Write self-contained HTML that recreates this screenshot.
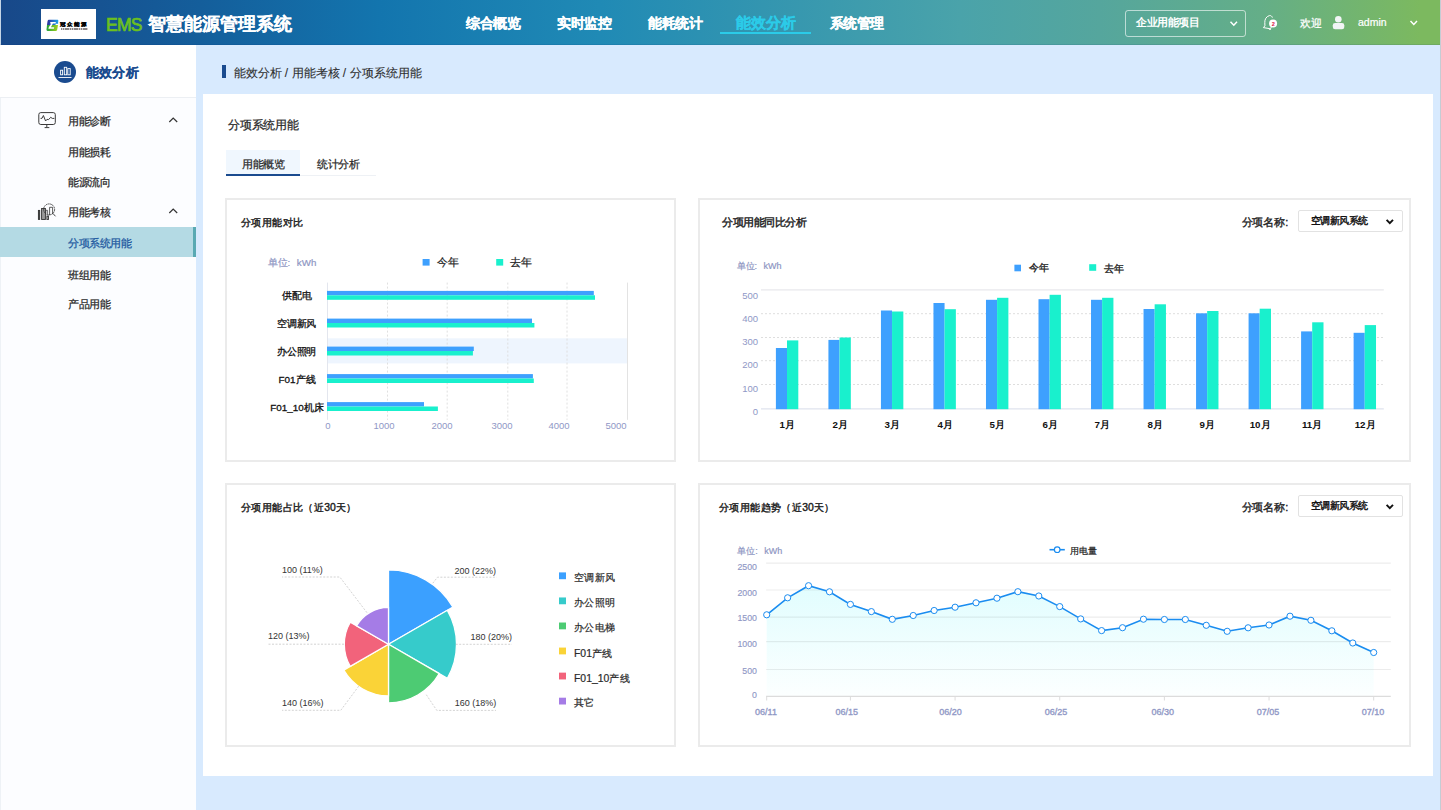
<!DOCTYPE html><html><head><meta charset="utf-8"><title>EMS 智慧能源管理系统</title><style>
*{margin:0;padding:0;box-sizing:border-box}
html,body{width:1441px;height:810px;overflow:hidden;background:#d8eafe;font-family:"Liberation Sans",sans-serif;color:#333}
.a{position:absolute}
.t{position:absolute;white-space:nowrap;line-height:1}
.card{position:absolute;border:2px solid #ebebeb;background:#fff}
svg{position:absolute;left:0;top:0;overflow:visible}
</style></head><body>
<div class="a" style="left:0;top:0;width:1441px;height:45px;background:linear-gradient(90deg,#184889 0px,#145e9b 200px,#1375ae 380px,#208ab5 600px,#4aa3aa 960px,#55a69d 1100px,#64ae88 1260px,#7cb95f 1420px,#7cb95f 1441px)"></div>
<div class="a" style="left:0;top:0;width:1px;height:45px;background:#c5d5e6"></div>
<div class="a" style="left:0;top:44px;width:1441px;height:1px;background:rgba(0,40,120,0.1)"></div>
<div class="a" style="left:41px;top:9px;width:55px;height:30px;background:#fff"></div>
<div class="a" style="left:60.5px;top:28.2px;width:27.8px;height:1.5px;background:repeating-linear-gradient(90deg,#8a8585 0 1.2px,#d0cccc 1.2px 1.8px)"></div>
<div class="a" style="left:720px;top:32px;width:90.5px;height:2px;background:#2bcbe8"></div>
<div class="a" style="left:1125px;top:10px;width:121px;height:27px;border:1px solid rgba(255,255,255,0.6);border-radius:3px"></div>
<div class="a" style="left:1440px;top:0;width:1px;height:810px;background:#c5ccd4;z-index:5"></div>
<div class="a" style="left:0;top:45px;width:196px;height:765px;background:#fcfdff"></div>
<div class="a" style="left:0;top:45px;width:1px;height:765px;background:#eef2f6"></div>
<div class="a" style="left:0;top:45px;width:196px;height:52.5px;background:#fff;border-bottom:1px solid #eceff3"></div>
<div class="a" style="left:54.2px;top:61px;width:22px;height:22px;border-radius:50%;background:#1a4b8f"></div>
<div class="a" style="left:0;top:227px;width:196px;height:30px;background:#b4dae4;border-right:3px solid #59a9b3"></div>
<div class="a" style="left:203px;top:94px;width:1230px;height:682px;background:#fff"></div>
<div class="a" style="left:222px;top:64.5px;width:4.2px;height:13.4px;background:#1a4b8f"></div>
<div class="a" style="left:226px;top:150px;width:74px;height:26px;background:#f0f7fe;border-bottom:2px solid #1a4b8f"></div>
<div class="a" style="left:300px;top:174.5px;width:75.5px;height:1.5px;background:#eef1f5"></div>
<div class="card" style="left:225.2px;top:198.1px;width:450.5px;height:263.8px"></div>
<div class="card" style="left:697.9px;top:198.1px;width:712.9px;height:263.8px"></div>
<div class="card" style="left:225.2px;top:483.2px;width:450.5px;height:263.6px"></div>
<div class="card" style="left:697.9px;top:483.2px;width:712.9px;height:263.6px"></div>
<div class="a" style="left:1298.3px;top:210.2px;width:104.5px;height:22px;border:1px solid #e2e2e2;border-radius:2px"></div>
<div class="a" style="left:1298.3px;top:495.2px;width:104.5px;height:22px;border:1px solid #e2e2e2;border-radius:2px"></div>
<svg width="1441" height="810" style="left:0;top:0"><defs>
<linearGradient id="lgb" x1="0" y1="0" x2="1" y2="0"><stop offset="0" stop-color="#2b2a9a"/><stop offset="1" stop-color="#1ba3ea"/></linearGradient>
<linearGradient id="lgg" x1="0" y1="0" x2="1" y2="0"><stop offset="0" stop-color="#1e9e3a"/><stop offset="1" stop-color="#a6d21e"/></linearGradient>
<linearGradient id="ag" x1="0" y1="0" x2="0" y2="1"><stop offset="0" stop-color="#e1fdfe"/><stop offset="1" stop-color="#fcffff"/></linearGradient>
</defs>
<path d="M48.8 19.7 L57.6 19.7 Q58.4 19.7 58.3 20.6 L58 25 L47 25 L47.6 21 Q47.9 19.7 48.8 19.7 Z" fill="url(#lgb)"/>
<path d="M47 25 L58 25 L57.2 29.8 Q57 30.9 56 30.9 L47.6 30.9 Q46.4 30.9 46.5 29.8 Z" fill="url(#lgg)"/>
<path d="M50.4 21.9 L55.9 21.9 L55.5 23.5 L52.9 23.5 L50.9 27.3 L54.2 27.3 L53.9 28.8 L48.4 28.8 L48.8 27.3 L51.2 23.5 L50 23.5 Z" fill="#fff"/>
<rect x="55.6" y="23.8" width="3" height="1.2" fill="#fff"/><path d="M1230.5 21.8 L1233.8 25.2 L1237 21.8" fill="none" stroke="#fff" stroke-width="1.5"/><path d="M1410.5 21 L1413.8 24.4 L1417 21" fill="none" stroke="#fff" stroke-width="1.5"/><path d="M1269.4 15.6 C1266.2 16.5 1264.6 19.5 1264.8 22.5 L1264.9 25.8 L1263.4 27.6 L1270.5 28.8 L1271.5 26.5" fill="none" stroke="#fff" stroke-width="1" stroke-linejoin="round"/><path d="M1269.4 15.6 C1270.8 15.3 1272 16.2 1272.4 17.6" fill="none" stroke="#fff" stroke-width="1"/><path d="M1268.5 28.6 Q1269.3 30 1270.8 29.4" fill="none" stroke="#fff" stroke-width="1"/><circle cx="1273.1" cy="23.5" r="4" fill="#fff"/><text x="1273.2" y="25.6" font-size="5.6" font-weight="bold" fill="#d80f45" text-anchor="middle" font-family="Liberation Sans">2</text><circle cx="1338.3" cy="19.3" r="3.3" fill="#f2f5f6"/><rect x="1332.8" y="22.9" width="11.5" height="6.3" rx="2.3" fill="#f2f5f6"/><g fill="none" stroke="#fff" stroke-width="0.9"><rect x="60.6" y="70.2" width="2" height="4.6"/><rect x="64.3" y="67.3" width="2.4" height="7.5"/><rect x="67.8" y="68.6" width="2.4" height="6.2"/><path d="M58.5 77.5 L71.5 77.5"/></g><g fill="none" stroke="#333" stroke-width="1.2"><path d="M169.3 122 L173.2 118 L177.2 122"/><path d="M169.3 213 L173.2 209 L177.2 213"/></g><g fill="none" stroke="#3a3a3a" stroke-width="1"><rect x="38.8" y="112.6" width="16.5" height="11.9" rx="2"/><path d="M40.6 118.4 L42 118.3 L43.4 115.5 L45.6 121 L47 119.3 L48.5 119.7 L50.7 117.3 L52.3 118.4 L54.3 118.4"/><path d="M46.8 124.5 L46.8 127 M44.6 127.6 L49.3 127.6"/></g><g stroke="#333" stroke-width="0.9"><rect x="38.4" y="210.4" width="1.3" height="9" fill="#333"/><rect x="41.6" y="208.5" width="3.8" height="11" fill="#999"/><rect x="46.9" y="216" width="1.6" height="3.5" fill="#bbb"/><circle cx="49.1" cy="209.4" r="5.5" fill="none" stroke-dasharray="1.6,0.6"/><path d="M52.8 213.3 L55.5 216.3" fill="none"/><path d="M49.6 215 L49.6 207.3 L52.6 207.3 L52.6 214" fill="none" stroke-width="0.8"/><path d="M45.9 213.5 L45.9 210.3 L47.6 210.3 L47.6 214.5" fill="none" stroke-width="0.7"/></g><rect x="422.6" y="259" width="7" height="6.6" fill="#3ea0fe"/><rect x="496.2" y="259" width="7" height="6.6" fill="#19f0cd"/><rect x="327" y="338.3" width="300.5" height="25.1" fill="#eef5fe"/><line x1="387.5" y1="282.6" x2="387.5" y2="419.8" stroke="#dcdcdc" stroke-width="0.9" stroke-dasharray="2,2"/><line x1="447.2" y1="282.6" x2="447.2" y2="419.8" stroke="#dcdcdc" stroke-width="0.9" stroke-dasharray="2,2"/><line x1="507.8" y1="282.6" x2="507.8" y2="419.8" stroke="#dcdcdc" stroke-width="0.9" stroke-dasharray="2,2"/><line x1="567" y1="282.6" x2="567" y2="419.8" stroke="#dcdcdc" stroke-width="0.9" stroke-dasharray="2,2"/><line x1="627.5" y1="282.6" x2="627.5" y2="419.8" stroke="#e3e3e3" stroke-width="1"/><line x1="327.5" y1="282.6" x2="327.5" y2="419.8" stroke="#e3e6ee" stroke-width="1"/><rect x="327" y="290.90000000000003" width="266.79999999999995" height="4.4" fill="#3ea0fe"/><rect x="327" y="295.3" width="268" height="4.5" fill="#19f0cd"/><rect x="327" y="318.6" width="205" height="4.4" fill="#3ea0fe"/><rect x="327" y="323" width="207.39999999999998" height="4.5" fill="#19f0cd"/><rect x="327" y="346.6" width="146.8" height="4.4" fill="#3ea0fe"/><rect x="327" y="351" width="145.89999999999998" height="4.5" fill="#19f0cd"/><rect x="327" y="374.1" width="205.89999999999998" height="4.4" fill="#3ea0fe"/><rect x="327" y="378.5" width="206.79999999999995" height="4.5" fill="#19f0cd"/><rect x="327" y="402.1" width="97" height="4.4" fill="#3ea0fe"/><rect x="327" y="406.5" width="110.89999999999998" height="4.5" fill="#19f0cd"/><path d="M1386.6 219.8 L1389.8 223.2 L1393 219.8" fill="none" stroke="#111" stroke-width="1.9"/><rect x="1014.4" y="264.7" width="6.6" height="6.6" fill="#3ea0fe"/><rect x="1089.2" y="264.2" width="7" height="6.6" fill="#19f0cd"/><line x1="761" y1="313.7" x2="1383.8" y2="313.7" stroke="#dedede" stroke-width="1" stroke-dasharray="2,2"/><line x1="761" y1="337.5" x2="1383.8" y2="337.5" stroke="#dedede" stroke-width="1" stroke-dasharray="2,2"/><line x1="761" y1="360.7" x2="1383.8" y2="360.7" stroke="#dedede" stroke-width="1" stroke-dasharray="2,2"/><line x1="761" y1="384.5" x2="1383.8" y2="384.5" stroke="#dedede" stroke-width="1" stroke-dasharray="2,2"/><line x1="761" y1="289.9" x2="1383.8" y2="289.9" stroke="#e8e8ec" stroke-width="1.2"/><line x1="761" y1="408.9" x2="1383.8" y2="408.9" stroke="#dfe3ee" stroke-width="1.2"/><rect x="775.90" y="348" width="11.1" height="61.20" fill="#3ea0fe"/><rect x="787.00" y="340.4" width="11.3" height="68.80" fill="#19f0cd"/><rect x="828.42" y="339.9" width="11.1" height="69.30" fill="#3ea0fe"/><rect x="839.52" y="337.5" width="11.3" height="71.70" fill="#19f0cd"/><rect x="880.94" y="310.5" width="11.1" height="98.70" fill="#3ea0fe"/><rect x="892.04" y="311.5" width="11.3" height="97.70" fill="#19f0cd"/><rect x="933.46" y="303" width="11.1" height="106.20" fill="#3ea0fe"/><rect x="944.56" y="309.2" width="11.3" height="100.00" fill="#19f0cd"/><rect x="985.98" y="299.8" width="11.1" height="109.40" fill="#3ea0fe"/><rect x="997.08" y="297.8" width="11.3" height="111.40" fill="#19f0cd"/><rect x="1038.50" y="299.2" width="11.1" height="110.00" fill="#3ea0fe"/><rect x="1049.60" y="294.8" width="11.3" height="114.40" fill="#19f0cd"/><rect x="1091.02" y="299.8" width="11.1" height="109.40" fill="#3ea0fe"/><rect x="1102.12" y="297.8" width="11.3" height="111.40" fill="#19f0cd"/><rect x="1143.54" y="309" width="11.1" height="100.20" fill="#3ea0fe"/><rect x="1154.64" y="304.3" width="11.3" height="104.90" fill="#19f0cd"/><rect x="1196.06" y="313.3" width="11.1" height="95.90" fill="#3ea0fe"/><rect x="1207.16" y="311" width="11.3" height="98.20" fill="#19f0cd"/><rect x="1248.58" y="313.3" width="11.1" height="95.90" fill="#3ea0fe"/><rect x="1259.68" y="308.7" width="11.3" height="100.50" fill="#19f0cd"/><rect x="1301.10" y="331.4" width="11.1" height="77.80" fill="#3ea0fe"/><rect x="1312.20" y="322.3" width="11.3" height="86.90" fill="#19f0cd"/><rect x="1353.62" y="332.8" width="11.1" height="76.40" fill="#3ea0fe"/><rect x="1364.72" y="325.1" width="11.3" height="84.10" fill="#19f0cd"/><path d="M388.5 644.3 L388.50 569.90 A74.40 74.40 0 0 1 452.93 607.10 Z" fill="#3ba0ff" stroke="#fff" stroke-width="1.3"/><path d="M388.5 644.3 L447.39 610.30 A68.00 68.00 0 0 1 447.39 678.30 Z" fill="#36cbcb" stroke="#fff" stroke-width="1.3"/><path d="M388.5 644.3 L439.25 673.60 A58.60 58.60 0 0 1 388.50 702.90 Z" fill="#4dcb73" stroke="#fff" stroke-width="1.3"/><path d="M388.5 644.3 L388.50 695.90 A51.60 51.60 0 0 1 343.81 670.10 Z" fill="#fad337" stroke="#fff" stroke-width="1.3"/><path d="M388.5 644.3 L350.22 666.40 A44.20 44.20 0 0 1 350.22 622.20 Z" fill="#f2637b" stroke="#fff" stroke-width="1.3"/><path d="M388.5 644.3 L356.54 625.85 A36.90 36.90 0 0 1 388.50 607.40 Z" fill="#a57ce6" stroke="#fff" stroke-width="1.3"/><polyline points="432.8,583.2 437.5,577.2 496.6,577.2" fill="none" stroke="#c8c8c8" stroke-width="0.8" stroke-dasharray="2,1.5"/><polyline points="455.7,644.3 512,644.3" fill="none" stroke="#c8c8c8" stroke-width="0.8" stroke-dasharray="2,1.5"/><polyline points="426.3,694.7 436.8,710.4 496,710.4" fill="none" stroke="#c8c8c8" stroke-width="0.8" stroke-dasharray="2,1.5"/><polyline points="367,612.7 339.8,577 282,577" fill="none" stroke="#c8c8c8" stroke-width="0.8" stroke-dasharray="2,1.5"/><polyline points="344,644.2 268,644.2" fill="none" stroke="#c8c8c8" stroke-width="0.8" stroke-dasharray="2,1.5"/><polyline points="358.7,686.2 340.8,710.3 282,710.3" fill="none" stroke="#c8c8c8" stroke-width="0.8" stroke-dasharray="2,1.5"/><rect x="559" y="572.40" width="7" height="6.8" fill="#3ba0ff"/><rect x="559" y="597.46" width="7" height="6.8" fill="#36cbcb"/><rect x="559" y="622.52" width="7" height="6.8" fill="#4dcb73"/><rect x="559" y="647.58" width="7" height="6.8" fill="#fad337"/><rect x="559" y="672.64" width="7" height="6.8" fill="#f2637b"/><rect x="559" y="697.70" width="7" height="6.8" fill="#a57ce6"/><path d="M1386.6 504.8 L1389.8 508.2 L1393 504.8" fill="none" stroke="#111" stroke-width="1.9"/><line x1="1049.5" y1="549.7" x2="1064.8" y2="549.7" stroke="#1a8cf0" stroke-width="1.6"/><circle cx="1057.2" cy="549.7" r="2.8" fill="#fff" stroke="#1a8cf0" stroke-width="1.2"/><polygon points="766.70,696.1 766.70,614.8 787.63,597.8 808.56,585.7 829.49,591.8 850.42,604.4 871.36,611.6 892.29,619.3 913.22,615.5 934.15,610.5 955.08,607.2 976.01,602.8 996.94,598.2 1017.87,591.7 1038.80,596 1059.73,606.6 1080.67,618.9 1101.60,630.6 1122.53,627.7 1143.46,619.2 1164.39,619.5 1185.32,619.5 1206.25,625.3 1227.18,631.3 1248.11,627.8 1269.04,625 1289.98,616.2 1310.91,620.3 1331.84,630.8 1352.77,643 1373.70,652.5 1373.70,696.1" fill="url(#ag)"/><line x1="766.1" y1="563.1" x2="1390.8" y2="563.1" stroke="rgba(0,0,0,0.075)" stroke-width="1.2"/><line x1="766.1" y1="590" x2="1390.8" y2="590" stroke="rgba(0,0,0,0.075)" stroke-width="1.2"/><line x1="766.1" y1="617.1" x2="1390.8" y2="617.1" stroke="rgba(0,0,0,0.075)" stroke-width="1.2"/><line x1="766.1" y1="641.6" x2="1390.8" y2="641.6" stroke="rgba(0,0,0,0.075)" stroke-width="1.2"/><line x1="766.1" y1="669.5" x2="1390.8" y2="669.5" stroke="rgba(0,0,0,0.075)" stroke-width="1.2"/><line x1="766.1" y1="696.3" x2="1390.8" y2="696.3" stroke="#dcdcdc" stroke-width="1.2"/><line x1="766.70" y1="696.3" x2="766.70" y2="700.5" stroke="#dcdcdc" stroke-width="1"/><line x1="850.42" y1="696.3" x2="850.42" y2="700.5" stroke="#dcdcdc" stroke-width="1"/><line x1="955.08" y1="696.3" x2="955.08" y2="700.5" stroke="#dcdcdc" stroke-width="1"/><line x1="1059.73" y1="696.3" x2="1059.73" y2="700.5" stroke="#dcdcdc" stroke-width="1"/><line x1="1164.39" y1="696.3" x2="1164.39" y2="700.5" stroke="#dcdcdc" stroke-width="1"/><line x1="1269.04" y1="696.3" x2="1269.04" y2="700.5" stroke="#dcdcdc" stroke-width="1"/><line x1="1373.70" y1="696.3" x2="1373.70" y2="700.5" stroke="#dcdcdc" stroke-width="1"/><polyline points="766.70,614.8 787.63,597.8 808.56,585.7 829.49,591.8 850.42,604.4 871.36,611.6 892.29,619.3 913.22,615.5 934.15,610.5 955.08,607.2 976.01,602.8 996.94,598.2 1017.87,591.7 1038.80,596 1059.73,606.6 1080.67,618.9 1101.60,630.6 1122.53,627.7 1143.46,619.2 1164.39,619.5 1185.32,619.5 1206.25,625.3 1227.18,631.3 1248.11,627.8 1269.04,625 1289.98,616.2 1310.91,620.3 1331.84,630.8 1352.77,643 1373.70,652.5" fill="none" stroke="#1a8cf0" stroke-width="1.6"/><circle cx="766.70" cy="614.8" r="3.1" fill="#fff" stroke="#1a8cf0" stroke-width="1"/><circle cx="787.63" cy="597.8" r="3.1" fill="#fff" stroke="#1a8cf0" stroke-width="1"/><circle cx="808.56" cy="585.7" r="3.1" fill="#fff" stroke="#1a8cf0" stroke-width="1"/><circle cx="829.49" cy="591.8" r="3.1" fill="#fff" stroke="#1a8cf0" stroke-width="1"/><circle cx="850.42" cy="604.4" r="3.1" fill="#fff" stroke="#1a8cf0" stroke-width="1"/><circle cx="871.36" cy="611.6" r="3.1" fill="#fff" stroke="#1a8cf0" stroke-width="1"/><circle cx="892.29" cy="619.3" r="3.1" fill="#fff" stroke="#1a8cf0" stroke-width="1"/><circle cx="913.22" cy="615.5" r="3.1" fill="#fff" stroke="#1a8cf0" stroke-width="1"/><circle cx="934.15" cy="610.5" r="3.1" fill="#fff" stroke="#1a8cf0" stroke-width="1"/><circle cx="955.08" cy="607.2" r="3.1" fill="#fff" stroke="#1a8cf0" stroke-width="1"/><circle cx="976.01" cy="602.8" r="3.1" fill="#fff" stroke="#1a8cf0" stroke-width="1"/><circle cx="996.94" cy="598.2" r="3.1" fill="#fff" stroke="#1a8cf0" stroke-width="1"/><circle cx="1017.87" cy="591.7" r="3.1" fill="#fff" stroke="#1a8cf0" stroke-width="1"/><circle cx="1038.80" cy="596" r="3.1" fill="#fff" stroke="#1a8cf0" stroke-width="1"/><circle cx="1059.73" cy="606.6" r="3.1" fill="#fff" stroke="#1a8cf0" stroke-width="1"/><circle cx="1080.67" cy="618.9" r="3.1" fill="#fff" stroke="#1a8cf0" stroke-width="1"/><circle cx="1101.60" cy="630.6" r="3.1" fill="#fff" stroke="#1a8cf0" stroke-width="1"/><circle cx="1122.53" cy="627.7" r="3.1" fill="#fff" stroke="#1a8cf0" stroke-width="1"/><circle cx="1143.46" cy="619.2" r="3.1" fill="#fff" stroke="#1a8cf0" stroke-width="1"/><circle cx="1164.39" cy="619.5" r="3.1" fill="#fff" stroke="#1a8cf0" stroke-width="1"/><circle cx="1185.32" cy="619.5" r="3.1" fill="#fff" stroke="#1a8cf0" stroke-width="1"/><circle cx="1206.25" cy="625.3" r="3.1" fill="#fff" stroke="#1a8cf0" stroke-width="1"/><circle cx="1227.18" cy="631.3" r="3.1" fill="#fff" stroke="#1a8cf0" stroke-width="1"/><circle cx="1248.11" cy="627.8" r="3.1" fill="#fff" stroke="#1a8cf0" stroke-width="1"/><circle cx="1269.04" cy="625" r="3.1" fill="#fff" stroke="#1a8cf0" stroke-width="1"/><circle cx="1289.98" cy="616.2" r="3.1" fill="#fff" stroke="#1a8cf0" stroke-width="1"/><circle cx="1310.91" cy="620.3" r="3.1" fill="#fff" stroke="#1a8cf0" stroke-width="1"/><circle cx="1331.84" cy="630.8" r="3.1" fill="#fff" stroke="#1a8cf0" stroke-width="1"/><circle cx="1352.77" cy="643" r="3.1" fill="#fff" stroke="#1a8cf0" stroke-width="1"/><circle cx="1373.70" cy="652.5" r="3.1" fill="#fff" stroke="#1a8cf0" stroke-width="1"/></svg>
<div class="t" style="left:60.3px;top:21px;font-size:6px;font-weight:bold;color:#000;-webkit-text-stroke:0.2px #000;letter-spacing:1.05px;transform:scaleY(0.9);transform-origin:0 0">冠众能源</div>
<div class="t" style="left:106.3px;top:16.4px;font-size:18px;color:#6cc01e;-webkit-text-stroke:0.720px #6cc01e;transform:scale(0.9722);transform-origin:0 0;letter-spacing:-0.75px;">EMS</div>
<div class="t" style="left:147.6px;top:15.3px;font-size:18px;color:#fff;font-weight:bold;-webkit-text-stroke:0.150px #fff;">智慧能源管理系统</div>
<div class="t" style="left:466px;top:15.6px;font-size:14px;color:#fff;font-weight:bold;-webkit-text-stroke:0.200px #fff;letter-spacing:-0.400px;">综合概览</div>
<div class="t" style="left:557px;top:15.6px;font-size:14px;color:#fff;font-weight:bold;-webkit-text-stroke:0.200px #fff;letter-spacing:-0.400px;">实时监控</div>
<div class="t" style="left:648px;top:15.6px;font-size:14px;color:#fff;font-weight:bold;-webkit-text-stroke:0.200px #fff;letter-spacing:-0.400px;">能耗统计</div>
<div class="t" style="left:829.6px;top:15.6px;font-size:14px;color:#fff;font-weight:bold;-webkit-text-stroke:0.200px #fff;letter-spacing:-0.400px;">系统管理</div>
<div class="t" style="left:735.6px;top:15.2px;font-size:15px;color:#2bcbe8;font-weight:bold;-webkit-text-stroke:0.250px #2bcbe8;">能效分析</div>
<div class="t" style="left:1136.4px;top:16.5px;font-size:11px;color:#fff;font-weight:bold;letter-spacing:-0.500px;">企业用能项目</div>
<div class="t" style="left:1300px;top:18.2px;font-size:11px;color:#fff;-webkit-text-stroke:0.250px #fff;letter-spacing:-0.500px;">欢迎</div>
<div class="t" style="left:1357.5px;top:17px;font-size:11px;color:#fff;-webkit-text-stroke:0.210px #fff;transform:scale(0.9545);transform-origin:0 0;">admin</div>
<div class="t" style="left:85.8px;top:65.7px;font-size:13px;color:#1a4b8f;font-weight:bold;-webkit-text-stroke:0.150px #1a4b8f;letter-spacing:0.300px;">能效分析</div>
<div class="t" style="left:68.0px;top:116.1px;font-size:11px;color:#2a2a2a;-webkit-text-stroke:0.250px #2a2a2a;letter-spacing:-0.5px;">用能诊断</div>
<div class="t" style="left:68.0px;top:146.6px;font-size:11px;color:#2a2a2a;-webkit-text-stroke:0.250px #2a2a2a;letter-spacing:-0.5px;">用能损耗</div>
<div class="t" style="left:68.0px;top:177.1px;font-size:11px;color:#2a2a2a;-webkit-text-stroke:0.250px #2a2a2a;letter-spacing:-0.5px;">能源流向</div>
<div class="t" style="left:68.0px;top:207.2px;font-size:11px;color:#2a2a2a;-webkit-text-stroke:0.250px #2a2a2a;letter-spacing:-0.5px;">用能考核</div>
<div class="t" style="left:68.0px;top:238.2px;font-size:11px;color:#1d58a0;-webkit-text-stroke:0.250px #1d58a0;letter-spacing:-0.5px;">分项系统用能</div>
<div class="t" style="left:68.0px;top:269.6px;font-size:11px;color:#2a2a2a;-webkit-text-stroke:0.250px #2a2a2a;letter-spacing:-0.5px;">班组用能</div>
<div class="t" style="left:68.0px;top:299.1px;font-size:11px;color:#2a2a2a;-webkit-text-stroke:0.250px #2a2a2a;letter-spacing:-0.5px;">产品用能</div>
<div class="t" style="left:233.5px;top:66.6px;font-size:12px;color:#2e2e2e;-webkit-text-stroke:0.100px #2e2e2e;">能效分析 / 用能考核 / 分项系统用能</div>
<div class="t" style="left:228px;top:118.6px;font-size:12px;color:#2a2a2a;-webkit-text-stroke:0.250px #2a2a2a;letter-spacing:-0.200px;">分项系统用能</div>
<div class="t" style="left:242px;top:158.8px;font-size:11px;color:#2a2a2a;-webkit-text-stroke:0.250px #2a2a2a;letter-spacing:-0.500px;">用能概览</div>
<div class="t" style="left:317px;top:159.4px;font-size:11px;color:#2a2a2a;-webkit-text-stroke:0.250px #2a2a2a;letter-spacing:-0.500px;">统计分析</div>
<div class="t" style="left:241px;top:217.6px;font-size:10px;color:#222;-webkit-text-stroke:0.400px #222;letter-spacing:0.400px;">分项用能对比</div>
<div class="t" style="left:268px;top:257.6px;font-size:10px;color:#8e96c3;-webkit-text-stroke:0.205px #8e96c3;transform:scale(0.9750);transform-origin:0 0;">单位:<span style="margin-left:6.8px">kWh</span></div>
<div class="t" style="left:437.3px;top:256.9px;font-size:11px;color:#222;-webkit-text-stroke:0.200px #222;letter-spacing:-0.500px;">今年</div>
<div class="t" style="left:510.4px;top:256.9px;font-size:11px;color:#222;-webkit-text-stroke:0.200px #222;letter-spacing:-0.500px;">去年</div>
<div class="t" style="left:256.60px;top:291.40000000000003px;width:80px;text-align:center;font-size:10px;color:#111;-webkit-text-stroke:0.300px #111;letter-spacing:-0.100px;">供配电</div>
<div class="t" style="left:256.60px;top:319.1px;width:80px;text-align:center;font-size:10px;color:#111;-webkit-text-stroke:0.300px #111;letter-spacing:-0.100px;">空调新风</div>
<div class="t" style="left:256.60px;top:347.1px;width:80px;text-align:center;font-size:10px;color:#111;-webkit-text-stroke:0.300px #111;letter-spacing:-0.100px;">办公照明</div>
<div class="t" style="left:256.60px;top:374.6px;width:80px;text-align:center;font-size:10px;color:#111;-webkit-text-stroke:0.303px #111;transform:scale(0.9900);transform-origin:50% 0;">F01产线</div>
<div class="t" style="left:256.60px;top:402.6px;width:80px;text-align:center;font-size:10px;color:#111;-webkit-text-stroke:0.303px #111;transform:scale(0.9900);transform-origin:50% 0;">F01_10机床</div>
<div class="t" style="left:307.70px;top:420.8px;width:40px;text-align:center;font-size:10px;color:#9098c6;transform:scale(0.9500);transform-origin:50% 0;">0</div>
<div class="t" style="left:363.50px;top:420.8px;width:40px;text-align:center;font-size:10px;color:#9098c6;transform:scale(0.9500);transform-origin:50% 0;">1000</div>
<div class="t" style="left:422.00px;top:420.8px;width:40px;text-align:center;font-size:10px;color:#9098c6;transform:scale(0.9500);transform-origin:50% 0;">2000</div>
<div class="t" style="left:482.40px;top:420.8px;width:40px;text-align:center;font-size:10px;color:#9098c6;transform:scale(0.9500);transform-origin:50% 0;">3000</div>
<div class="t" style="left:538.70px;top:420.8px;width:40px;text-align:center;font-size:10px;color:#9098c6;transform:scale(0.9500);transform-origin:50% 0;">4000</div>
<div class="t" style="left:596.30px;top:420.8px;width:40px;text-align:center;font-size:10px;color:#9098c6;transform:scale(0.9500);transform-origin:50% 0;">5000</div>
<div class="t" style="left:722px;top:217.0px;font-size:11px;color:#222;-webkit-text-stroke:0.400px #222;letter-spacing:-0.500px;">分项用能同比分析</div>
<div class="t" style="left:1241.6px;top:216.8px;font-size:11px;color:#222;-webkit-text-stroke:0.350px #222;letter-spacing:-0.100px;">分项名称:</div>
<div class="t" style="left:1310.7px;top:216.1px;font-size:10px;color:#111;-webkit-text-stroke:0.400px #111;letter-spacing:-0.500px;">空调新风系统</div>
<div class="t" style="left:736.6px;top:261.8px;font-size:9px;color:#8e96c3;-webkit-text-stroke:0.200px #8e96c3;">单位:<span style="margin-left:6.5px">kWh</span></div>
<div class="t" style="left:1029.2px;top:263.2px;font-size:10px;color:#222;-webkit-text-stroke:0.350px #222;letter-spacing:-0.250px;">今年</div>
<div class="t" style="left:1104px;top:263.8px;font-size:10px;color:#222;-webkit-text-stroke:0.350px #222;letter-spacing:-0.250px;">去年</div>
<div class="t" style="left:728.30px;top:290.8px;width:30px;text-align:right;font-size:10px;color:#9098c6;transform:scale(0.9500);transform-origin:100% 0;">500</div>
<div class="t" style="left:728.30px;top:313.6px;width:30px;text-align:right;font-size:10px;color:#9098c6;transform:scale(0.9500);transform-origin:100% 0;">400</div>
<div class="t" style="left:728.30px;top:336.6px;width:30px;text-align:right;font-size:10px;color:#9098c6;transform:scale(0.9500);transform-origin:100% 0;">300</div>
<div class="t" style="left:728.30px;top:359.90000000000003px;width:30px;text-align:right;font-size:10px;color:#9098c6;transform:scale(0.9500);transform-origin:100% 0;">200</div>
<div class="t" style="left:728.30px;top:383.6px;width:30px;text-align:right;font-size:10px;color:#9098c6;transform:scale(0.9500);transform-origin:100% 0;">100</div>
<div class="t" style="left:728.30px;top:406.6px;width:30px;text-align:right;font-size:10px;color:#9098c6;transform:scale(0.9500);transform-origin:100% 0;">0</div>
<div class="t" style="left:767.00px;top:419.5px;width:40px;text-align:center;font-size:10px;color:#111;font-weight:bold;transform:scale(0.9750);transform-origin:50% 0;">1月</div>
<div class="t" style="left:819.52px;top:419.5px;width:40px;text-align:center;font-size:10px;color:#111;font-weight:bold;transform:scale(0.9750);transform-origin:50% 0;">2月</div>
<div class="t" style="left:872.04px;top:419.5px;width:40px;text-align:center;font-size:10px;color:#111;font-weight:bold;transform:scale(0.9750);transform-origin:50% 0;">3月</div>
<div class="t" style="left:924.56px;top:419.5px;width:40px;text-align:center;font-size:10px;color:#111;font-weight:bold;transform:scale(0.9750);transform-origin:50% 0;">4月</div>
<div class="t" style="left:977.08px;top:419.5px;width:40px;text-align:center;font-size:10px;color:#111;font-weight:bold;transform:scale(0.9750);transform-origin:50% 0;">5月</div>
<div class="t" style="left:1029.60px;top:419.5px;width:40px;text-align:center;font-size:10px;color:#111;font-weight:bold;transform:scale(0.9750);transform-origin:50% 0;">6月</div>
<div class="t" style="left:1082.12px;top:419.5px;width:40px;text-align:center;font-size:10px;color:#111;font-weight:bold;transform:scale(0.9750);transform-origin:50% 0;">7月</div>
<div class="t" style="left:1134.64px;top:419.5px;width:40px;text-align:center;font-size:10px;color:#111;font-weight:bold;transform:scale(0.9750);transform-origin:50% 0;">8月</div>
<div class="t" style="left:1187.16px;top:419.5px;width:40px;text-align:center;font-size:10px;color:#111;font-weight:bold;transform:scale(0.9750);transform-origin:50% 0;">9月</div>
<div class="t" style="left:1239.68px;top:419.5px;width:40px;text-align:center;font-size:10px;color:#111;font-weight:bold;transform:scale(0.9750);transform-origin:50% 0;">10月</div>
<div class="t" style="left:1292.20px;top:419.5px;width:40px;text-align:center;font-size:10px;color:#111;font-weight:bold;transform:scale(0.9750);transform-origin:50% 0;">11月</div>
<div class="t" style="left:1344.72px;top:419.5px;width:40px;text-align:center;font-size:10px;color:#111;font-weight:bold;transform:scale(0.9750);transform-origin:50% 0;">12月</div>
<div class="t" style="left:240.6px;top:501.8px;font-size:11px;color:#222;-webkit-text-stroke:0.423px #222;transform:scale(0.9455);transform-origin:0 0;">分项用能占比（近30天）</div>
<div class="t" style="left:454.6px;top:566.5px;font-size:9px;color:#333;">200 (22%)</div>
<div class="t" style="left:470.4px;top:633px;font-size:9px;color:#333;">180 (20%)</div>
<div class="t" style="left:454.7px;top:699px;font-size:9px;color:#333;">160 (18%)</div>
<div class="t" style="left:282px;top:565.8px;font-size:9px;color:#333;">100 (11%)</div>
<div class="t" style="left:268px;top:632.3px;font-size:9px;color:#333;">120 (13%)</div>
<div class="t" style="left:282px;top:698.6px;font-size:9px;color:#333;">140 (16%)</div>
<div class="t" style="left:573.9px;top:573.0px;font-size:10px;color:#2a2a2a;-webkit-text-stroke:0.200px #2a2a2a;letter-spacing:0.400px;">空调新风</div>
<div class="t" style="left:573.9px;top:598.06px;font-size:10px;color:#2a2a2a;-webkit-text-stroke:0.200px #2a2a2a;letter-spacing:0.400px;">办公照明</div>
<div class="t" style="left:573.9px;top:623.12px;font-size:10px;color:#2a2a2a;-webkit-text-stroke:0.200px #2a2a2a;letter-spacing:0.400px;">办公电梯</div>
<div class="t" style="left:573.9px;top:648.18px;font-size:11px;color:#2a2a2a;-webkit-text-stroke:0.212px #2a2a2a;transform:scale(0.9455);transform-origin:0 0;">F01产线</div>
<div class="t" style="left:573.9px;top:673.24px;font-size:11px;color:#2a2a2a;-webkit-text-stroke:0.212px #2a2a2a;transform:scale(0.9455);transform-origin:0 0;">F01_10产线</div>
<div class="t" style="left:573.9px;top:698.3px;font-size:10px;color:#2a2a2a;-webkit-text-stroke:0.200px #2a2a2a;letter-spacing:0.400px;">其它</div>
<div class="t" style="left:718.5px;top:501.8px;font-size:11px;color:#222;-webkit-text-stroke:0.423px #222;transform:scale(0.9455);transform-origin:0 0;">分项用能趋势（近30天）</div>
<div class="t" style="left:1241.6px;top:501.8px;font-size:11px;color:#222;-webkit-text-stroke:0.350px #222;letter-spacing:-0.100px;">分项名称:</div>
<div class="t" style="left:1310.7px;top:501.1px;font-size:10px;color:#111;-webkit-text-stroke:0.400px #111;letter-spacing:-0.500px;">空调新风系统</div>
<div class="t" style="left:737.2px;top:547.2px;font-size:9px;color:#8e96c3;-webkit-text-stroke:0.200px #8e96c3;">单位:<span style="margin-left:6.5px">kWh</span></div>
<div class="t" style="left:1070.1px;top:546.8px;font-size:9px;color:#222;-webkit-text-stroke:0.200px #222;">用电量</div>
<div class="t" style="left:727.40px;top:563.4px;width:30px;text-align:right;font-size:9px;color:#9098c6;-webkit-text-stroke:0.153px #9098c6;transform:scale(0.9778);transform-origin:100% 0;">2500</div>
<div class="t" style="left:727.40px;top:588.5px;width:30px;text-align:right;font-size:9px;color:#9098c6;-webkit-text-stroke:0.153px #9098c6;transform:scale(0.9778);transform-origin:100% 0;">2000</div>
<div class="t" style="left:727.40px;top:614.3px;width:30px;text-align:right;font-size:9px;color:#9098c6;-webkit-text-stroke:0.153px #9098c6;transform:scale(0.9778);transform-origin:100% 0;">1500</div>
<div class="t" style="left:727.40px;top:640.0px;width:30px;text-align:right;font-size:9px;color:#9098c6;-webkit-text-stroke:0.153px #9098c6;transform:scale(0.9778);transform-origin:100% 0;">1000</div>
<div class="t" style="left:727.40px;top:666.5px;width:30px;text-align:right;font-size:9px;color:#9098c6;-webkit-text-stroke:0.153px #9098c6;transform:scale(0.9778);transform-origin:100% 0;">500</div>
<div class="t" style="left:727.40px;top:691.3px;width:30px;text-align:right;font-size:9px;color:#9098c6;-webkit-text-stroke:0.153px #9098c6;transform:scale(0.9778);transform-origin:100% 0;">0</div>
<div class="t" style="left:746.00px;top:707.8px;width:40px;text-align:center;font-size:9px;color:#9098c6;-webkit-text-stroke:0.350px #9098c6;">06/11</div>
<div class="t" style="left:826.80px;top:707.8px;width:40px;text-align:center;font-size:9px;color:#9098c6;-webkit-text-stroke:0.350px #9098c6;">06/15</div>
<div class="t" style="left:930.50px;top:707.8px;width:40px;text-align:center;font-size:9px;color:#9098c6;-webkit-text-stroke:0.350px #9098c6;">06/20</div>
<div class="t" style="left:1036.00px;top:707.8px;width:40px;text-align:center;font-size:9px;color:#9098c6;-webkit-text-stroke:0.350px #9098c6;">06/25</div>
<div class="t" style="left:1142.70px;top:707.8px;width:40px;text-align:center;font-size:9px;color:#9098c6;-webkit-text-stroke:0.350px #9098c6;">06/30</div>
<div class="t" style="left:1248.00px;top:707.8px;width:40px;text-align:center;font-size:9px;color:#9098c6;-webkit-text-stroke:0.350px #9098c6;">07/05</div>
<div class="t" style="left:1353.00px;top:707.8px;width:40px;text-align:center;font-size:9px;color:#9098c6;-webkit-text-stroke:0.350px #9098c6;">07/10</div>
</body></html>
